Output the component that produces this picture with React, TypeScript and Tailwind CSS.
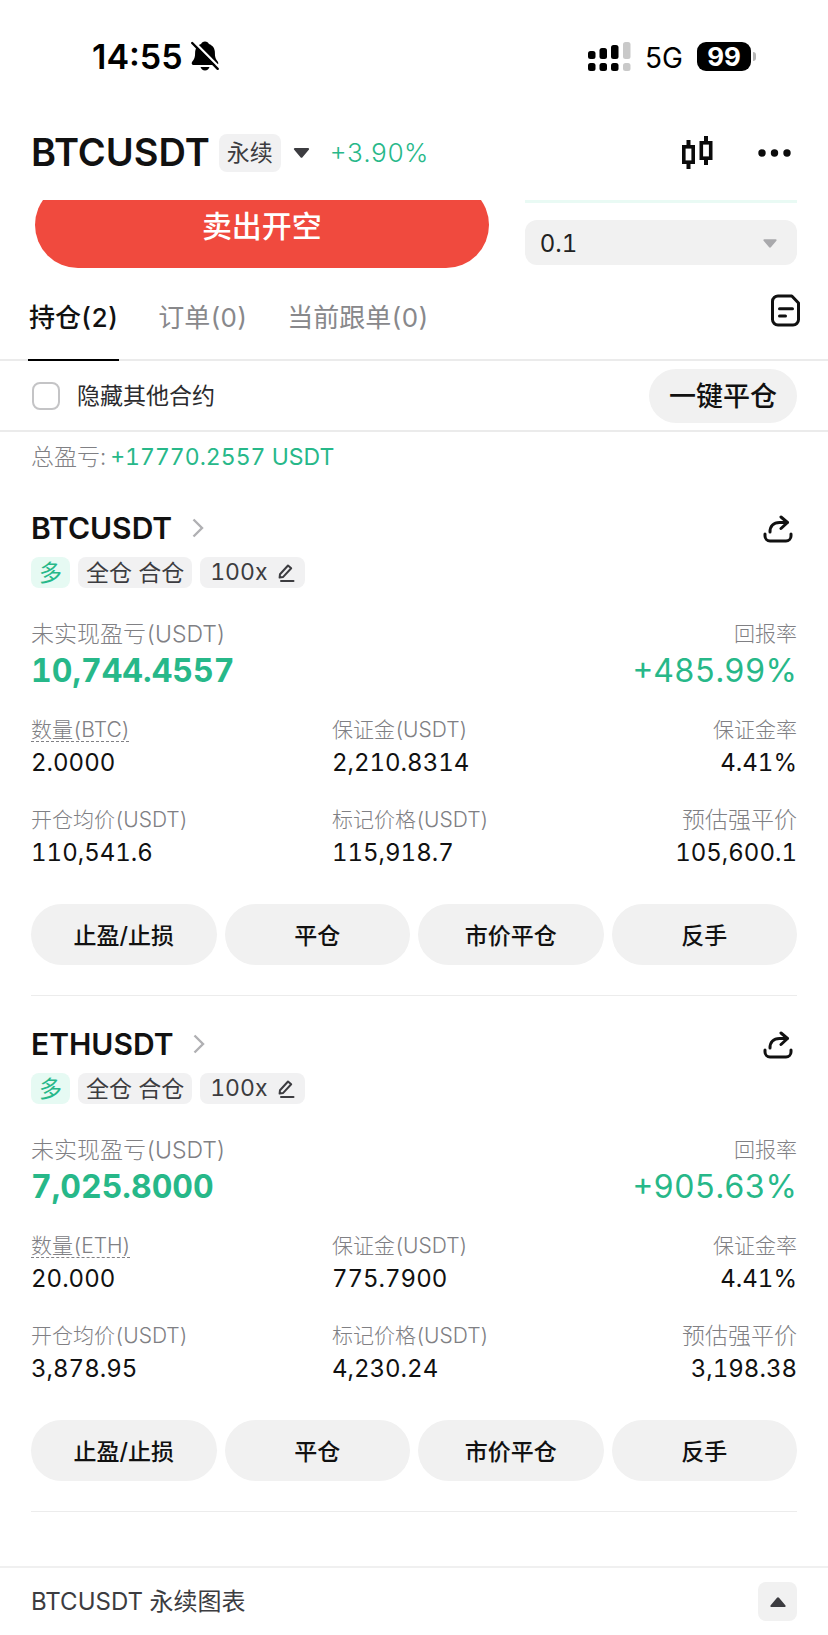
import React from 'react'

const positions = [
  {
    symbol: 'BTCUSDT',
    coin: 'BTC',
    pnl: '10,744.4557',
    roi: '+485.99%',
    size: '2.0000',
    margin: '2,210.8314',
    marginRate: '4.41%',
    entryPrice: '110,541.6',
    markPrice: '115,918.7',
    liqPrice: '105,600.1',
  },
  {
    symbol: 'ETHUSDT',
    coin: 'ETH',
    pnl: '7,025.8000',
    roi: '+905.63%',
    size: '20.000',
    margin: '775.7900',
    marginRate: '4.41%',
    entryPrice: '3,878.95',
    markPrice: '4,230.24',
    liqPrice: '3,198.38',
  },
]

const actions = ['止盈/止损', '平仓', '市价平仓', '反手']

function BellOffIcon() {
  return (
    <svg width="28" height="30" viewBox="0 0 28 30" fill="none">
      <path
        d="M14 .5c2 0 3.400 1 3.900 2.600 4 1.400 6 4.600 6 8.900 0 3.600.5 5.500 2 7.400.9 1.200 1.400 1.900 1.400 2.800 0 1.100-.8 1.800-2 1.800H2.700c-1.200 0-2-.7-2-1.800 0-.9.500-1.600 1.400-2.800 1.500-1.900 2-3.800 2-7.400 0-4.300 2-7.500 6-8.900C10.600 1.500 12 .5 14 .5Z"
        fill="#000"
      />
      <path d="M9.500 26h9c-.5 2-2.300 3.400-4.500 3.400S10 28 9.500 26Z" fill="#000" />
      <path d="M3 .8 28 26" stroke="#fff" strokeWidth="2.400" />
      <path d="M1.200 2 26.700 27.800" stroke="#000" strokeWidth="2.400" strokeLinecap="round" />
    </svg>
  )
}

function SignalIcon() {
  return (
    <svg width="43" height="29" viewBox="0 0 43 29">
      <g fill="#000">
        <rect x="0" y="9" width="7.500" height="8" rx="2.500" />
        <rect x="11.500" y="6" width="7.500" height="11" rx="2.500" />
        <rect x="23" y="3" width="7.500" height="14" rx="2.500" />
        <rect x="0" y="21" width="7.500" height="8" rx="2.500" />
        <rect x="11.500" y="21" width="7.500" height="8" rx="2.500" />
        <rect x="23" y="21" width="7.500" height="8" rx="2.500" />
      </g>
      <g fill="#c9c9c9">
        <rect x="35" y="0" width="7.500" height="17" rx="2.500" />
        <rect x="35" y="21" width="7.500" height="8" rx="2.500" />
      </g>
    </svg>
  )
}

function CandlesIcon() {
  return (
    <svg width="31" height="33" viewBox="0 0 31 33" fill="none" stroke="#0b0b0b" strokeWidth="4">
      <path d="M6.500 4v6M6.500 27v6" />
      <rect x="1.800" y="10.800" width="9.400" height="15.400" strokeWidth="3.600" />
      <path d="M24 0v6M24 23v6" />
      <rect x="19.300" y="6.800" width="9.400" height="15.400" strokeWidth="3.600" />
    </svg>
  )
}

function MoreIcon() {
  return (
    <svg width="33" height="8" viewBox="0 0 33 8" fill="#0b0b0b">
      <circle cx="4" cy="4" r="3.700" />
      <circle cx="16.500" cy="4" r="3.700" />
      <circle cx="29" cy="4" r="3.700" />
    </svg>
  )
}

function OrdersIcon() {
  return (
    <svg width="29" height="33" viewBox="0 0 29 33" fill="none" stroke="#111" strokeWidth="3" strokeLinecap="round" strokeLinejoin="round">
      <path d="M7.500 2h13.300L27.500 9v16.500A5.500 5.500 0 0 1 22 31H7a5.500 5.500 0 0 1-5.500-5.500v-18A5.500 5.500 0 0 1 7.500 2Z" />
      <path d="M8.500 14.800h13M8.500 22h6" />
    </svg>
  )
}

function ShareIcon() {
  return (
    <svg width="30" height="28" viewBox="0 0 30 28" fill="none" stroke="#111" strokeWidth="3" strokeLinecap="round" strokeLinejoin="round">
      <path d="M2 19v2a5 5 0 0 0 5 5h16a5 5 0 0 0 5-5v-2" />
      <path d="M7 17c0-6 3.500-9.500 9.500-9.500H24" />
      <path d="M18 2l6.500 5.500L18 13.500" />
    </svg>
  )
}

function EditIcon() {
  return (
    <svg width="17" height="18" viewBox="0 0 17 18" fill="none" stroke="#3c3c40" strokeWidth="2" strokeLinecap="round" strokeLinejoin="round">
      <path d="M2 10.200 10 1.500l3.200 2.800-8 8.600-3.600.6.400-3.300Z" />
      <path d="M3 17h12.500" />
    </svg>
  )
}

function Caret({ className }: { className: string }) {
  return (
    <svg viewBox="0 0 16 10" className={className} fill="currentColor">
      <path d="M1.500 0h13c1 0 1.500 1 .8 1.800L9 9.300c-.6.700-1.400.7-2 0L.7 1.800C0 1 .5 0 1.500 0Z" />
    </svg>
  )
}

interface FieldProps {
  label: string
  value: string
  right?: boolean
  dashed?: boolean
  large?: boolean
}

function Field({ label, value, right, dashed, large }: FieldProps) {
  return (
    <div className={right ? 'text-right' : ''}>
      <dt className={`${large ? 'text-[23px]' : 'text-[21px]'} leading-7 font-light text-[#808084]`}>
        <span className={dashed ? 'underline decoration-dashed decoration-1 underline-offset-4' : ''}>{label}</span>
      </dt>
      <dd className="mt-[3px] text-2xl leading-8 text-[#111]">{value}</dd>
    </div>
  )
}

function PositionCard({ position }: { position: (typeof positions)[number] }) {
  return (
    <article className="mx-[31px] border-b border-[#ececec] pt-7 pb-[30px]">
      <div className="flex h-10 items-center justify-between">
        <a href="#contract" className="flex items-center gap-5 text-3xl font-semibold text-[#111]">
          {position.symbol}
          <svg width="12" height="20" viewBox="0 0 12 20" fill="none" stroke="#b0b0b3" strokeWidth="2.400">
            <path d="M1.500 1.500 10 10l-8.500 8.500" />
          </svg>
        </a>
        <button type="button" aria-label="分享" className="mr-1 pt-[2px]">
          <ShareIcon />
        </button>
      </div>

      <div className="mt-[9px] flex h-[31px] gap-2 text-[23px] leading-[33px] text-[#3c3c40]">
        <span className="rounded-lg bg-[#e6faf3] px-2 text-[#27b889]">多</span>
        <span className="rounded-lg bg-[#f1f1f2] px-2">全仓 合仓</span>
        <button type="button" className="flex items-center gap-[10px] rounded-lg bg-[#f1f1f2] px-[10px]">
          100x
          <EditIcon />
        </button>
      </div>

      <dl className="mt-8 flex justify-between">
        <div>
          <dt className="text-[23px] leading-7 font-light text-[#808084]">未实现盈亏(USDT)</dt>
          <dd className="mt-[3px] text-[32px] leading-10 font-bold text-[#27b889]">{position.pnl}</dd>
        </div>
        <div className="text-right">
          <dt className="text-[21px] leading-7 font-light text-[#808084]">回报率</dt>
          <dd className="mt-[3px] text-[32px] leading-10 text-[#27b889]">{position.roi}</dd>
        </div>
      </dl>

      <dl className="mt-[25px] grid grid-cols-[11fr_9fr_8fr] gap-y-[27px]">
        <Field label={`数量(${position.coin})`} value={position.size} dashed />
        <Field label="保证金(USDT)" value={position.margin} />
        <Field label="保证金率" value={position.marginRate} right />
        <Field label="开仓均价(USDT)" value={position.entryPrice} />
        <Field label="标记价格(USDT)" value={position.markPrice} />
        <Field label="预估强平价" value={position.liqPrice} right large />
      </dl>

      <div className="mt-[35px] grid grid-cols-4 gap-2">
        {actions.map(action => (
          <button key={action} type="button" className="h-[61px] rounded-full bg-[#f1f1f1] pt-[3px] text-[23px] font-medium text-[#111]">
            {action}
          </button>
        ))}
      </div>
    </article>
  )
}

export default function App() {
  return (
    <main className="w-full bg-white font-['Inter','Noto_Sans_CJK_SC',sans-serif] text-[#111] tabular-nums">
      <div className="flex h-28 items-center justify-between pr-[72px] pl-[92px] text-black">
        <div className="flex items-center gap-2 text-[34px] font-semibold proportional-nums">
          14:55
          <BellOffIcon />
        </div>
        <div className="flex items-center">
          <SignalIcon />
          <span className="ml-[14px] pt-[3px] text-[28px] proportional-nums">5G</span>
          <span className="ml-[14px] flex h-[29px] w-[54px] items-center justify-center rounded-[9px] bg-black text-[26px] font-bold text-white">
            99
          </span>
          <span className="ml-[2px] h-[9px] w-[3px] rounded-r-full bg-[#b5b5b5]" />
        </div>
      </div>

      <header className="flex h-[88px] items-center justify-between pr-[37px] pb-[7px] pl-[31px]">
        <div className="flex items-center">
          <h1 className="text-[38px] font-semibold">BTCUSDT</h1>
          <span className="ml-[9px] rounded-lg bg-[#f1f1f2] px-2 text-[23px] leading-[38px] text-[#3c3c40]">永续</span>
          <Caret className="ml-3 h-[10px] w-[17px] text-[#3c3c40]" />
          <span className="ml-5 text-[26px] font-light text-[#27b889]">+3.90%</span>
        </div>
        <div className="flex items-center gap-[45px]">
          <button type="button" aria-label="K线">
            <CandlesIcon />
          </button>
          <button type="button" aria-label="更多">
            <MoreIcon />
          </button>
        </div>
      </header>

      {/* 下单面板，滚动后只露出底部 */}
      <section className="flex gap-9 overflow-hidden pr-[31px] pl-[35px]">
        <button type="button" className="-mt-[18px] h-[86px] flex-[5] rounded-full bg-[#f04a3e] pt-[2px] text-3xl font-medium text-white">
          卖出开空
        </button>
        <div className="flex-[3]">
          <div className="h-[3px] bg-[#e9faf4]" />
          <div className="relative mt-[17px]">
            <select aria-label="深度" className="h-[45px] w-full appearance-none rounded-xl bg-[#f1f1f1] px-[15px] pt-[2px] text-2xl text-[#222]">
              <option>0.1</option>
            </select>
            <Caret className="pointer-events-none absolute top-[19px] right-5 h-[9px] w-[14px] text-[#a9a9ac]" />
          </div>
        </div>
      </section>

      <nav className="flex justify-between border-b-2 border-[#ebebeb] pt-[26px] pr-7 pl-7">
        <div className="-mb-[2px] flex gap-[38px] text-[26px] leading-10 text-[#88888b]">
          <button type="button" className="border-b-2 border-black px-px pt-1 pb-[21px] font-medium text-[#111]">
            持仓(2)
          </button>
          <button type="button" className="border-b-2 border-transparent px-px pt-1 pb-[21px]">
            订单(0)
          </button>
          <button type="button" className="border-b-2 border-transparent px-px pt-1 pb-[21px]">
            当前跟单(0)
          </button>
        </div>
        <button type="button" aria-label="历史记录" className="self-start">
          <OrdersIcon />
        </button>
      </nav>

      <div className="flex h-[71px] items-center justify-between border-b-2 border-[#ebebeb] pr-[31px] pl-8">
        <label className="flex items-center gap-[17px] text-[23px] text-[#2b2b2e]">
          <input type="checkbox" className="h-7 w-7 appearance-none rounded-lg border-2 border-[#c4c4c6] bg-white" />
          <span className="pt-[2px]">隐藏其他合约</span>
        </label>
        <button type="button" className="h-[54px] rounded-full bg-[#f1f1f1] px-5 pt-1 text-[27px] font-medium text-[#111]">
          一键平仓
        </button>
      </div>

      <p className="flex gap-1 px-[31px] pt-[9px] pb-[7px] text-[23px] leading-8 font-light text-[#808084]">
        总盈亏:
        <span className="font-normal text-[#27b889]">+17770.2557 USDT</span>
      </p>

      {positions.map(position => (
        <PositionCard key={position.symbol} position={position} />
      ))}

      <footer className="mt-[54px] flex items-center justify-between border-t-2 border-[#f0f0f0] px-[31px] py-[14px] text-2xl text-[#3c3c40]">
        <span>BTCUSDT 永续图表</span>
        <button type="button" aria-label="展开图表" className="flex h-[39px] w-[39px] items-center justify-center rounded-lg bg-[#f1f1f1]">
          <Caret className="h-[10px] w-4 rotate-180" />
        </button>
      </footer>
    </main>
  )
}
